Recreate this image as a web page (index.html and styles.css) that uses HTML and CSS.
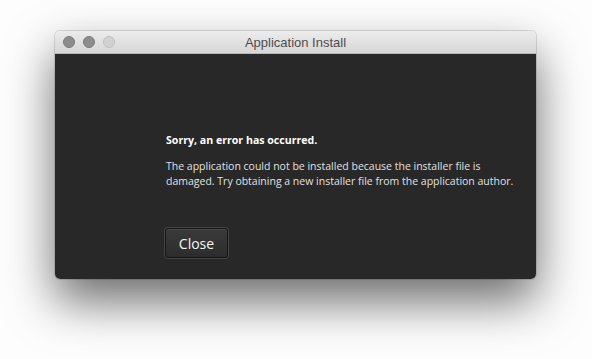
FILE: index.html
```html
<!DOCTYPE html>
<html lang="en">
<head>
  <meta charset="UTF-8">
  <title>Application Install</title>
  <link rel="stylesheet" href="styles.css">
</head>
<body>
  <div class="window">
    <div class="titlebar">
      <div class="lights">
        <span class="light"></span>
        <span class="light"></span>
        <span class="light off"></span>
      </div>
      <div class="title">Application Install</div>
    </div>
    <div class="content">
      <h1 class="heading">Sorry, an error has occurred.</h1>
      <p class="message">The application could not be installed because the installer file is<br>damaged. Try obtaining a new installer file from the application author.</p>
      <button class="close-button">Close</button>
    </div>
  </div>
</body>
</html>
```

FILE: styles.css
```css
* {
  box-sizing: border-box;
  margin: 0;
  padding: 0;
}

body {
  background: #fdfdfd;
  font-family: 'Open Sans', sans-serif;
  padding: 31px 0 0 55px;
  height: 359px;
  overflow: hidden;
}

.window {
  width: 481px;
  height: 248px;
  border-radius: 5px;
  box-shadow: 0 0 0 1px rgba(0, 0, 0, 0.12), 0 22px 48px rgba(0, 0, 0, 0.58);
  display: flex;
  flex-direction: column;
  overflow: hidden;
}

.titlebar {
  height: 23px;
  background: linear-gradient(to bottom, #ececec, #d6d6d6);
  border-bottom: 1px solid #b8b8b8;
  display: flex;
  align-items: center;
  position: relative;
}

.lights {
  display: flex;
  gap: 8px;
  padding-left: 8px;
}

.light {
  width: 12px;
  height: 12px;
  border-radius: 50%;
  background: #8d8d8d;
  border: 1px solid #7a7a7a;
}

.light.off {
  background: #d2d2d2;
  border-color: #c0c0c0;
}

.title {
  position: absolute;
  left: 0;
  right: 0;
  text-align: center;
  font-family: 'Liberation Sans', sans-serif;
  font-size: 13px;
  color: #4d4d4d;
}

.content {
  flex-grow: 1;
  background: #282828;
  padding: 79px 0 0 111px;
  color: #eee;
}

.heading {
  font-size: 10.6px;
  font-weight: bold;
  color: #fff;
  margin-bottom: 12px;
}

.message {
  font-size: 10.5px;
  line-height: 15px;
  color: #e0e0e0;
}

.close-button {
  margin: 39px 0 0 -1px;
  width: 63px;
  height: 30px;
  background: linear-gradient(to bottom, #3a3a3a, #2c2c2c);
  border: 1px solid #171717;
  box-shadow: inset 0 1px 0 rgba(255, 255, 255, 0.08), 0 0 0 1px #444;
  border-radius: 3px;
  color: #f4f4f4;
  font-family: 'Open Sans', sans-serif;
  font-size: 14px;
}
```
